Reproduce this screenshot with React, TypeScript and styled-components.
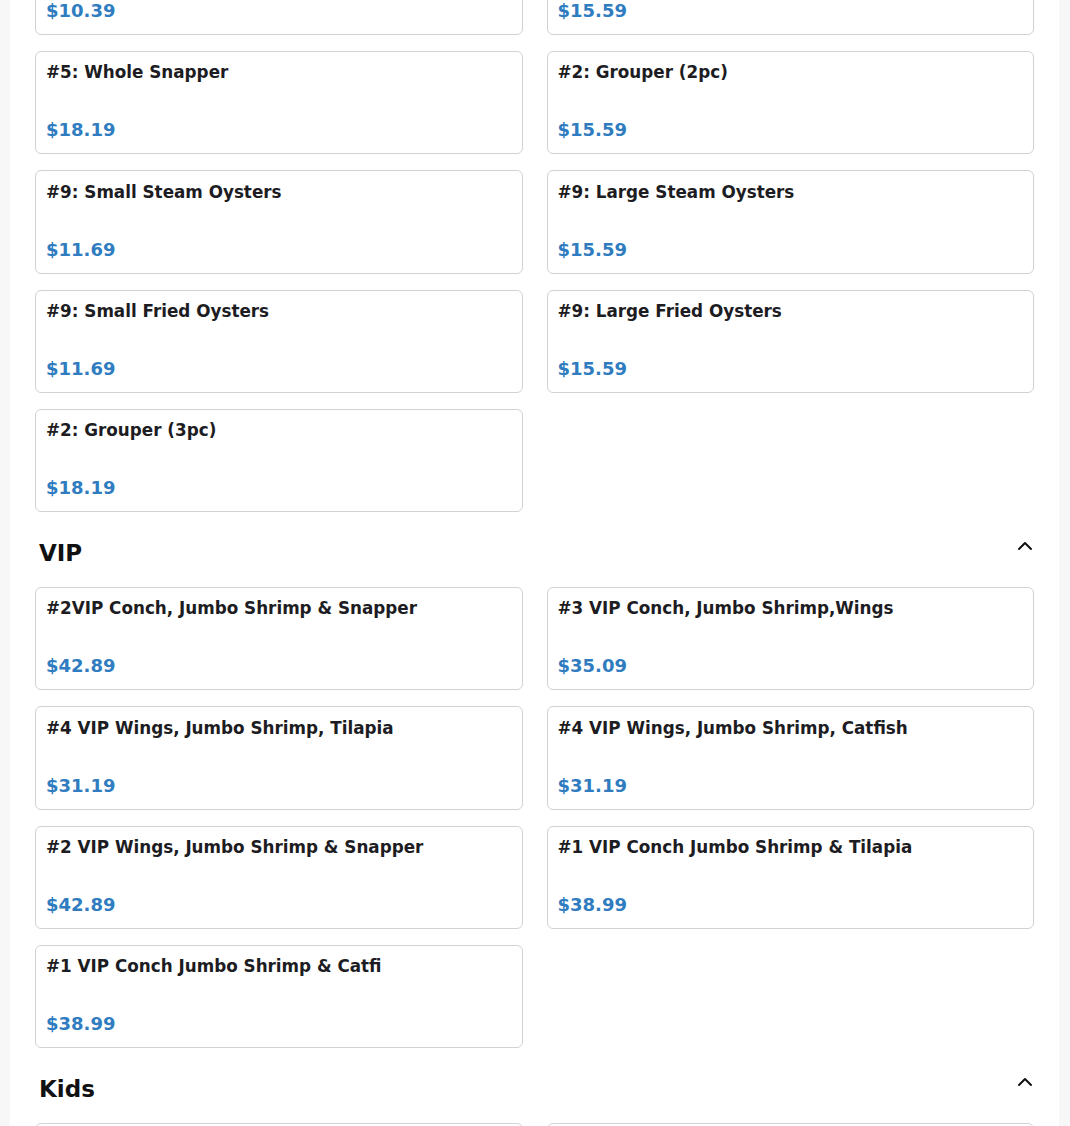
import React from "react";
import styled, { createGlobalStyle } from "styled-components";

const Global = createGlobalStyle`
    html, body {
        margin: 0;
        padding: 0;
        background-color: #f7f7f7;
        font-family: "DejaVu Sans", Verdana, sans-serif;
    }
    * {
        box-sizing: border-box;
    }
`;

const Page = styled.div`
    padding-left: 10px;
    height: 1126px;
    overflow: hidden;
`;

// the menu is shown scrolled part way down, so the panel starts above the window
const Panel = styled.main`
    width: 1049px;
    margin-top: -68.33px;
    padding: 0 25px 40px;
    background-color: #ffffff;
`;

const Section = styled.section``;

const SectionHead = styled.div`
    display: flex;
    justify-content: space-between;
    align-items: flex-start;
    padding: 28px 0 19.2px 4px;
`;

const SectionTitle = styled.h2`
    margin: 0;
    font-size: 23px;
    line-height: 27.6px;
    font-weight: bold;
    color: #111111;
`;

const Toggle = styled.button`
    display: flex;
    align-items: center;
    justify-content: center;
    width: 24px;
    height: 24px;
    margin: -6px -3px 0 0;
    padding: 0;
    border: none;
    background: none;
    color: #111111;
    cursor: pointer;
`;

const Grid = styled.div`
    display: grid;
    grid-template-columns: 1fr 1fr;
    column-gap: 24px;
    row-gap: 16px;
`;

const Card = styled.div`
    display: flex;
    flex-direction: column;
    justify-content: space-between;
    height: 103.33px;
    padding: 10.4px 10px 10px;
    border: 1px solid #d2d2d2;
    border-radius: 6px;
    background-color: #ffffff;
`;

const ItemName = styled.div`
    font-size: 16.8px;
    font-weight: bold;
    color: #1c1c22;
`;

const Price = styled.div`
    font-size: 18px;
    line-height: 1.5;
    font-weight: bold;
    color: #2f7cc0;
`;

type Item = { name: string; price: string };

const seafood: Item[] = [
    { name: "#5: Small Snapper", price: "$10.39" },
    { name: "#2: Grouper (1pc)", price: "$15.59" },
    { name: "#5: Whole Snapper", price: "$18.19" },
    { name: "#2: Grouper (2pc)", price: "$15.59" },
    { name: "#9: Small Steam Oysters", price: "$11.69" },
    { name: "#9: Large Steam Oysters", price: "$15.59" },
    { name: "#9: Small Fried Oysters", price: "$11.69" },
    { name: "#9: Large Fried Oysters", price: "$15.59" },
    { name: "#2: Grouper (3pc)", price: "$18.19" },
];

const vip: Item[] = [
    { name: "#2VIP Conch, Jumbo Shrimp & Snapper", price: "$42.89" },
    { name: "#3 VIP Conch, Jumbo Shrimp,Wings", price: "$35.09" },
    { name: "#4 VIP Wings, Jumbo Shrimp, Tilapia", price: "$31.19" },
    { name: "#4 VIP Wings, Jumbo Shrimp, Catfish", price: "$31.19" },
    { name: "#2 VIP Wings, Jumbo Shrimp & Snapper", price: "$42.89" },
    { name: "#1 VIP Conch Jumbo Shrimp & Tilapia", price: "$38.99" },
    { name: "#1 VIP Conch Jumbo Shrimp & Catfi", price: "$38.99" },
];

const kids: Item[] = [
    { name: "Kids Chicken Wings", price: "$7.79" },
    { name: "Kids Fish Nuggets", price: "$7.79" },
];

const ChevronUp = () => (
    <svg width="24" height="24" viewBox="0 0 24 24" fill="none" stroke="currentColor"
        strokeWidth="2" strokeLinecap="round" strokeLinejoin="round">
        <path d="m18 15-6-6-6 6" />
    </svg>
);

const Items = ({ items }: { items: Item[] }) => (
    <Grid>
        {items.map((it, i) => (
            <Card key={i}>
                <ItemName>{it.name}</ItemName>
                <Price>{it.price}</Price>
            </Card>
        ))}
    </Grid>
);

const MenuSection = ({ title, items }: { title: string; items: Item[] }) => (
    <Section>
        <SectionHead>
            <SectionTitle>{title}</SectionTitle>
            <Toggle aria-label="collapse">
                <ChevronUp />
            </Toggle>
        </SectionHead>
        <Items items={items} />
    </Section>
);

const App = () => {
    return (
        <>
            <Global />
            <Page>
                <Panel>
                    <Items items={seafood} />
                    <MenuSection title="VIP" items={vip} />
                    <MenuSection title="Kids" items={kids} />
                </Panel>
            </Page>
        </>
    );
};

export default App;
